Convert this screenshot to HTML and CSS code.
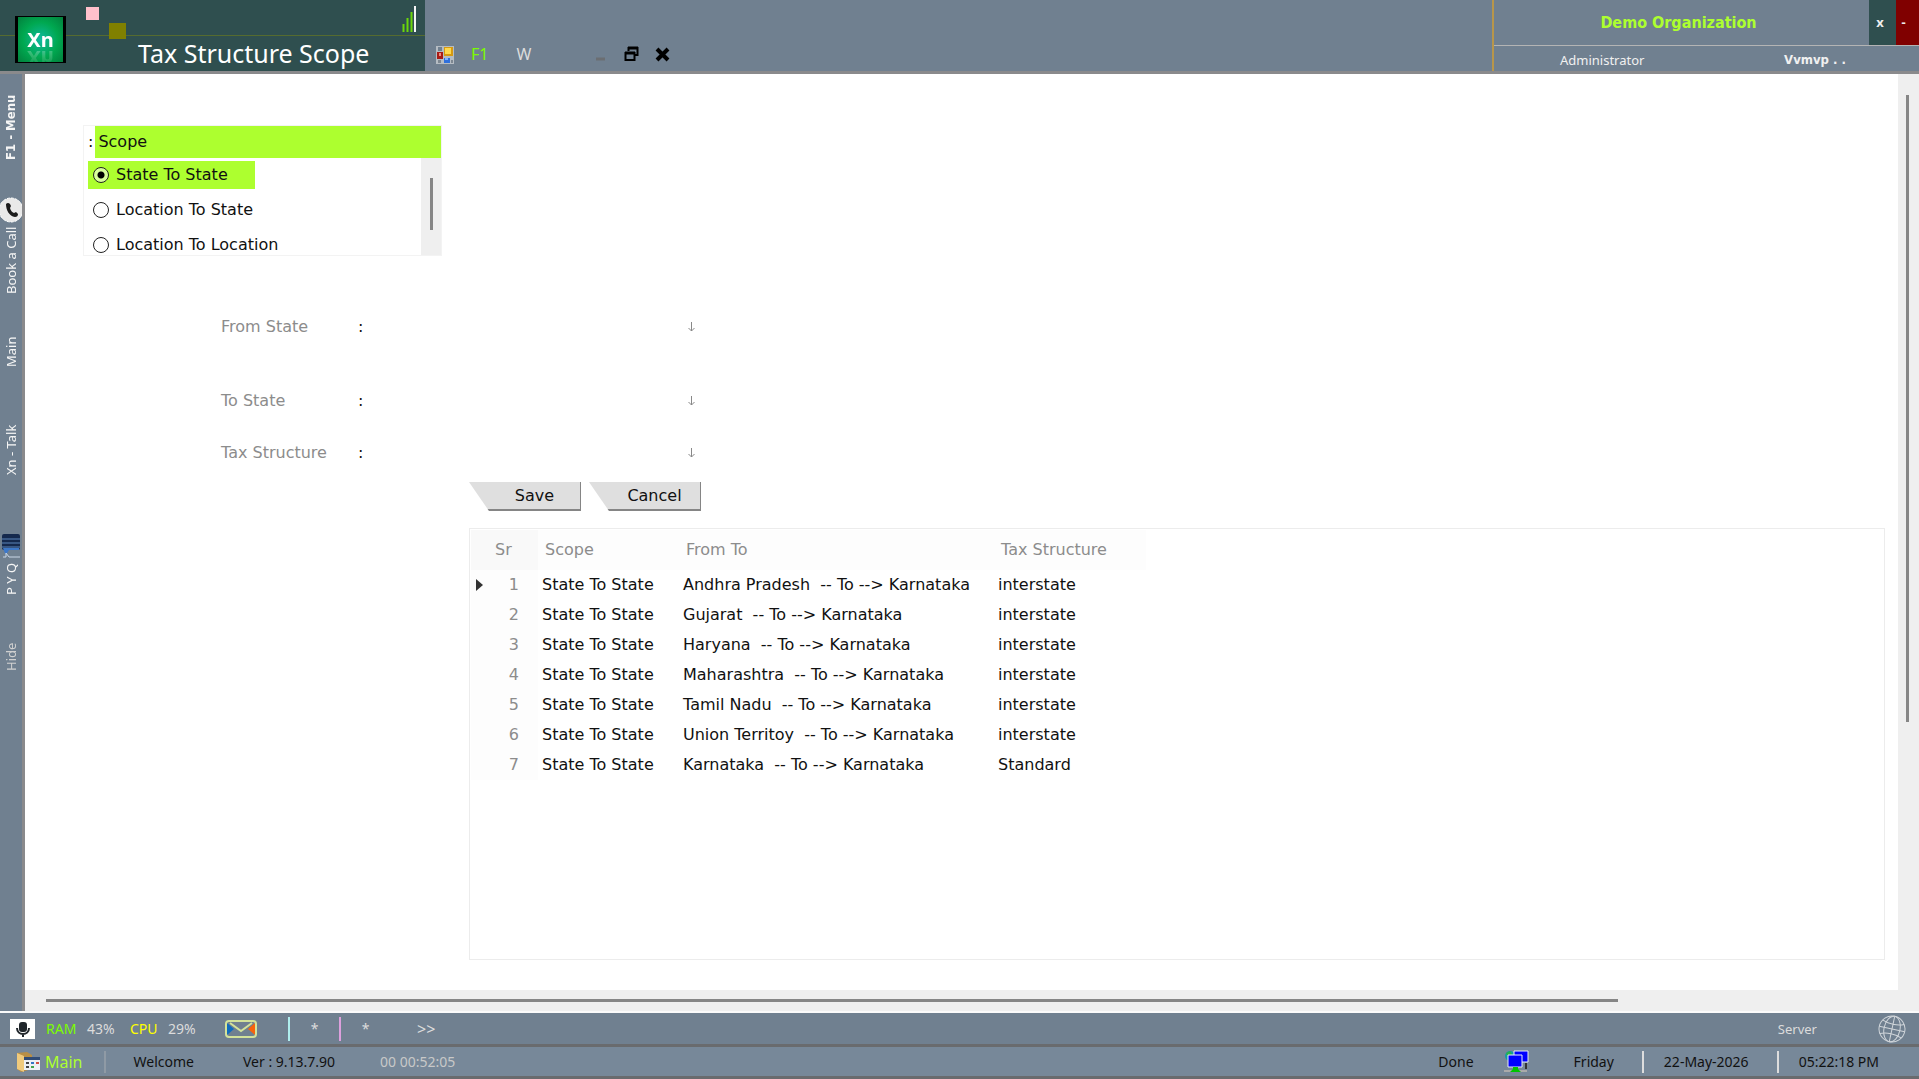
FILE: index.html
```
<!DOCTYPE html>
<html lang="en">
<head>
<meta charset="utf-8">
<title>Tax Structure Scope</title>
<link rel="stylesheet" href="styles.css">
</head>
<body>
<div class="app">
  <header class="topbar">
    <div class="brand">
      <div class="brand-upper">
        <svg class="signal" width="14" height="28" viewBox="0 0 14 28" aria-hidden="true">
          <path d="M1.500 19v8M5.500 13v14M9.500 7v20" stroke="#6bd60a" stroke-width="2"/>
          <path d="M13 1v26" stroke="#f5f5f5" stroke-width="2"/>
        </svg>
      </div>
      <div class="brand-lower"><h1 class="title">Tax Structure Scope</h1></div>
      <div class="logo"><span class="logo-text">Xn</span></div>
      <span class="square pink"></span>
      <span class="square olive"></span>
    </div>
    <nav class="window-tools">
      <svg width="18" height="18" viewBox="0 0 18 18" aria-hidden="true">
        <rect width="18" height="18" fill="#b5bcc3"/>
        <path d="M2 1h4v4H2z" fill="#708090"/><path d="M2 14h3v3H2zM15 14h2v3h-2z" fill="#7d8791"/>
        <rect x="8" y="1" width="9" height="9" fill="#d69a12"/><rect x="9" y="2" width="6" height="6" fill="#ffd94d"/>
        <rect x="1" y="6" width="6" height="7" fill="#a91b16"/><rect x="3" y="7" width="2" height="3" fill="#f18a7a"/>
        <rect x="8" y="12" width="6" height="5" fill="#2f70dc"/><rect x="9" y="12" width="3" height="2" fill="#7fb4ff"/>
      </svg>
      <a class="tool tool-f1" href="#">F1</a>
      <a class="tool tool-w" href="#">W</a>
      <div class="window-buttons">
        <button class="plain" aria-label="Minimize"><svg width="15" height="16" viewBox="0 0 15 16"><path d="M3 13h9" stroke="#6b6e72" stroke-width="3"/></svg></button>
        <button class="plain" aria-label="Restore"><svg width="15" height="16" viewBox="0 0 15 16"><path d="M4.500 5V2h9v7H11" fill="none" stroke="#000" stroke-width="2"/><path d="M4 2h10" stroke="#000" stroke-width="3"/><path d="M1.500 7h9v7h-9z" fill="none" stroke="#000" stroke-width="2"/><path d="M1 7h10" stroke="#000" stroke-width="3"/></svg></button>
        <button class="plain" aria-label="Close"><svg width="15" height="16" viewBox="0 0 15 16"><path d="M2 3l11 11M13 3L2 14" stroke="#000" stroke-width="4"/></svg></button>
      </div>
    </nav>
    <div class="account">
      <div class="account-upper">
        <strong class="org">Demo Organization</strong>
        <button class="corner corner-x">x</button>
        <button class="corner corner-min">-</button>
      </div>
      <div class="account-lower"><span>Administrator</span><strong class="company">Vvmvp . .</strong></div>
    </div>
  </header>

  <div class="middle">
    <nav class="sidebar">
      <a class="side side-menu" href="#">F1 - Menu</a>
      <a class="side side-call" href="#">Book a Call
        <svg width="22" height="26" viewBox="0 0 22 26" aria-hidden="true"><circle cx="11" cy="13" r="12" fill="#e9e9e9" stroke="#fff" stroke-width="1" stroke-dasharray="3 1"/><path d="M6 7q2-2 4 0l1 2-1 2q1 4 4 5l2-1 2 2q0 3-3 3C9 19 6 13 6 7z" fill="#1b1b1b"/></svg>
      </a>
      <a class="side side-main" href="#">Main</a>
      <a class="side side-talk" href="#">Xn - Talk</a>
      <a class="side side-pyq" href="#">P Y Q
        <svg width="20" height="25" viewBox="0 0 20 25" aria-hidden="true"><rect x="1" width="18" height="16" rx="2" fill="#15294d"/><path d="M1 5h18M1 9h18M1 13h18" stroke="#5d86bb"/><path d="M2 14h16v2H8l-3 5-2-4z" fill="#3d78c9"/><path d="M2 23h3v-4l3 4h11" fill="none" stroke="#c9d6e6"/></svg>
      </a>
      <a class="side side-hide" href="#">Hide</a>
    </nav>

    <main class="workspace">
      <div class="canvas">
        <section class="scope">
          <div class="scope-head"><span>:</span><h2 class="scope-title" id="scope-title">Scope</h2></div>
          <div class="scope-body">
            <div class="scope-list" role="radiogroup" aria-labelledby="scope-title">
              <label class="option"><input type="radio" name="scope" checked>State To State</label>
              <label class="option"><input type="radio" name="scope">Location To State</label>
              <label class="option"><input type="radio" name="scope">Location To Location</label>
            </div>
            <div class="scope-scroll"><span></span></div>
          </div>
        </section>

        <form class="fields">
          <div class="field field-from"><label for="from">From State</label><span>:</span><select id="from"><option></option></select></div>
          <div class="field field-to"><label for="to">To State</label><span>:</span><select id="to"><option></option></select></div>
          <div class="field"><label for="tax">Tax Structure</label><span>:</span><select id="tax"><option></option></select></div>
        </form>

        <div class="results">
          <div class="actions">
            <button class="slant">Save</button>
            <button class="slant">Cancel</button>
          </div>
          <div class="grid-frame">
            <table class="grid">
              <colgroup><col class="col-sr"><col class="col-scope"><col class="col-from"><col class="col-tax"></colgroup>
              <thead><tr><th class="sr">Sr</th><th>Scope</th><th>From To</th><th>Tax Structure</th></tr></thead>
              <tbody>
                <tr class="current"><td class="sr">1</td><td>State To State</td><td>Andhra Pradesh  -- To --&gt; Karnataka</td><td>interstate</td></tr>
                <tr><td class="sr">2</td><td>State To State</td><td>Gujarat  -- To --&gt; Karnataka</td><td>interstate</td></tr>
                <tr><td class="sr">3</td><td>State To State</td><td>Haryana  -- To --&gt; Karnataka</td><td>interstate</td></tr>
                <tr><td class="sr">4</td><td>State To State</td><td>Maharashtra  -- To --&gt; Karnataka</td><td>interstate</td></tr>
                <tr><td class="sr">5</td><td>State To State</td><td>Tamil Nadu  -- To --&gt; Karnataka</td><td>interstate</td></tr>
                <tr><td class="sr">6</td><td>State To State</td><td>Union Territoy  -- To --&gt; Karnataka</td><td>interstate</td></tr>
                <tr><td class="sr">7</td><td>State To State</td><td>Karnataka  -- To --&gt; Karnataka</td><td>Standard</td></tr>
              </tbody>
            </table>
          </div>
        </div>
      </div>
      <div class="vscroll"><span></span></div>
      <div class="hscroll"><span></span></div>
    </main>
  </div>

  <footer class="footer">
    <div class="status">
      <svg class="mic" width="25" height="20" viewBox="0 0 25 20" aria-hidden="true"><rect width="25" height="20" fill="#fff"/><rect x="9" y="3" width="8" height="10" rx="3" fill="#20262b"/><path d="M7 9c0 8 12 8 12 0M13 15v3" fill="none" stroke="#20262b" stroke-width="2"/></svg>
      <span class="ram">RAM</span><span class="ram-value">43%</span>
      <span class="cpu">CPU</span><span class="cpu-value">29%</span>
      <svg class="mail" width="32" height="18" viewBox="0 0 32 18" aria-hidden="true"><path d="M2 3l7 6-7 6z" fill="#0f6cbd"/><path d="M30 3l-7 6 7 6z" fill="#f7630c"/><rect x="1" y="1" width="30" height="16" rx="3" fill="none" stroke="#d3e29a" stroke-width="2"/><path d="M5 3l11 8L27 3" fill="none" stroke="#d3e29a" stroke-width="2"/></svg>
      <span class="tick cyan"></span><span class="star">*</span>
      <span class="tick plum"></span><span class="star">*</span>
      <span class="more">&gt;&gt;</span>
      <span class="server">Server</span>
      <svg width="28" height="28" viewBox="0 0 28 28" fill="none" stroke="#d0d5da" aria-hidden="true"><g transform="rotate(12 14 14)"><circle cx="14" cy="14" r="13"/><ellipse cx="14" cy="14" rx="8" ry="13"/><path d="M1 14h26M3 7c6 3 16 3 22 0M3 21c6-3 16-3 22 0M14 1v26"/></g></svg>
    </div>
    <div class="status status-lower">
      <svg width="24" height="22" viewBox="0 0 24 22" aria-hidden="true"><path d="M1 2l10-1 5 3v14L5 21l-4-3z" fill="#b98f45"/><path d="M1 2l7 3v16l-7-3z" fill="#f0ca7c"/><rect x="8" y="6" width="16" height="13" fill="#edf0f4"/><path d="M8 6h16v3H8z" fill="#314c75"/><path d="M10 12h3M10 16h3" stroke="#444" stroke-width="2"/><path d="M15 12h3" stroke="#3476c5" stroke-width="2"/><path d="M15 16h3" stroke="#42a34b" stroke-width="2"/><path d="M20 12h3" stroke="#d05043" stroke-width="2"/></svg>
      <a class="main-link" href="#">Main</a>
      <span class="divider"></span>
      <span class="welcome">Welcome</span>
      <span class="version">Ver : 9.13.7.90</span>
      <span class="elapsed">00 00:52:05</span>
      <span class="done">Done</span>
      <svg class="network" width="25" height="23" viewBox="0 0 25 23" aria-hidden="true"><circle cx="6" cy="6" r="5" fill="#1499a8"/><path d="M2 3l4-2 2 3-4 4z" fill="#28b34d"/><path d="M10 1h14v11H10z" fill="#00f" stroke="#e7edf5" stroke-width="1"/><path d="M4 5h14v12H4z" fill="#00f" stroke="#e7edf5" stroke-width="1"/><path d="M22 13v6" stroke="#333" stroke-width="2"/><path d="M0 21h23" stroke="#aaa" stroke-width="2"/><path d="M9 17h5v2l3 3H6l3-3z" fill="#00c400"/></svg>
      <span class="day">Friday</span>
      <span class="divider light"></span>
      <span class="date">22-May-2026</span>
      <span class="divider light"></span>
      <span class="time">05:22:18 PM</span>
    </div>
  </footer>
</div>
</body>
</html>
```
FILE: styles.css
```
* { box-sizing: border-box; }
body { margin: 0; font: 16px/20px "DejaVu Sans", sans-serif; color: #111; background: #fff; }
a { text-decoration: none; color: inherit; }
button { font: inherit; border: 0; padding: 0; }
h1, h2 { margin: 0; font-weight: 400; }
svg { flex: none; display: block; }

.app { min-height: 100vh; display: flex; flex-direction: column; }

/* top bar */
.topbar { display: flex; height: 74px; background: #708090; border-bottom: 3px solid #8a8a8c; color: #f0f0f0; }
.brand { position: relative; width: 425px; background: #2f4f4f; display: flex; flex-direction: column; }
.brand-upper { height: 36px; border-bottom: 1px solid #556b2f; display: flex; justify-content: flex-end; align-items: center; padding: 2px 9px 0 0; }
.brand-lower { flex: 1; padding: 1px 0 0 138px; }
.title { font: 25px/32px "Noto Sans", sans-serif; color: #fff; white-space: nowrap; }
.logo { position: absolute; left: 15px; top: 16px; width: 51px; height: 47px; overflow: hidden; border: solid #000; border-width: 1px 3px; background: radial-gradient(#10b9a0 0, #00a850 55%, #02803c 100%); text-align: center; }
.logo-text { display: block; margin-top: 12px; font: bold 20px/22px "Noto Sans", sans-serif; color: #fff; -webkit-box-reflect: below -4px linear-gradient(transparent, rgba(255, 255, 255, .3)); }
.square { position: absolute; }
.pink { left: 86px; top: 7px; width: 13px; height: 13px; background: #ffc0cb; }
.olive { left: 109px; top: 23px; width: 17px; height: 16px; background: #808000; }
.window-tools { flex: 1; display: flex; align-items: flex-end; padding: 0 0 7px 11px; }
.tool { font: 16px/20px "Noto Sans", sans-serif; }
.tool-f1 { color: #7cfc00; margin-left: 17px; }
.tool-w { color: #dcdcdc; margin-left: 28px; }
.window-buttons { display: flex; gap: 16px; margin-left: 62px; padding-bottom: 2px; }
.plain { background: none; }
.account { width: 427px; border-left: 2px solid #b8964a; display: flex; flex-direction: column; font: 13px/20px "Noto Sans", sans-serif; }
.account-upper { display: flex; height: 46px; border-bottom: 1px solid #b4b4b4; }
.org { flex: 1; display: flex; align-items: center; justify-content: center; padding-right: 6px; font: bold 16px/20px "DejaVu Sans Condensed", "DejaVu Sans", sans-serif; color: #adff2f; }
.corner { color: #eee; font: bold 13px/20px "Noto Sans", sans-serif; }
.corner-x { width: 27px; background: #2f4f4f; padding: 0 5px 2px 0; }
.corner-min { width: 23px; background: #800000; padding: 0 8px 2px 0; }
.account-lower { flex: 1; display: flex; align-items: center; justify-content: space-between; padding: 2px 73px 0 66px; }
.company { font-family: "DejaVu Sans Condensed", "DejaVu Sans", sans-serif; }

/* side bar */
.middle { flex: 1; display: flex; }
.sidebar { width: 25px; background: #708090; border-right: 3px solid #8a8a8c; display: flex; flex-direction: column; align-items: center; color: #f5f5f5; font: 13px/20px "Noto Sans", sans-serif; padding-top: 17px; }
.side { writing-mode: vertical-rl; transform: rotate(180deg); display: flex; align-items: center; gap: 4px; white-space: nowrap; }
.side svg { transform: rotate(180deg); }
.side-menu { height: 69px; font-weight: 700; font-family: "DejaVu Sans Condensed", "DejaVu Sans", sans-serif; }
.side-call { margin-top: 36px; height: 98px; }
.side-main { margin-top: 43px; height: 30px; }
.side-talk { margin-top: 54px; height: 54px; }
.side-pyq { margin-top: 56px; height: 64px; }
.side-hide { margin-top: 48px; height: 28px; color: #d0d0d0; }

/* work area */
.workspace { flex: 1; min-width: 0; display: grid; grid-template-columns: minmax(0, 1fr) 21px; grid-template-rows: 1fr 21px; background: #efefef; }
.canvas { background: #fff; padding: 51px 13px 30px 58px; display: flex; flex-direction: column; }
.vscroll { display: flex; justify-content: center; padding: 21px 2px 0 0; }
.vscroll span { width: 3px; height: 70%; background: #868686; }
.hscroll { grid-column: 1 / -1; padding: 9px 24px 0 21px; }
.hscroll span { display: block; width: 85%; height: 3px; background: #868686; }

.scope { width: 359px; border: 1px solid #f3f3f3; }
.scope-head { display: flex; align-items: center; padding-left: 4px; gap: 2px; }
.scope-title { flex: 1; font-size: 16px; line-height: 32px; padding-left: 3px; background: #adff2f; }
.scope-body { display: flex; height: 97px; overflow: hidden; }
.scope-list { flex: 1; padding: 3px 0 0 4px; display: flex; flex-direction: column; align-items: flex-start; gap: 7px; }
.option { flex: none; display: flex; align-items: center; gap: 7px; height: 28px; padding: 0 27px 0 5px; }
.option:has(:checked) { background: #adff2f; }
.option input { appearance: none; margin: 0; width: 16px; height: 16px; border: 1px solid #222; border-radius: 50%; background: #fff; }
.option input:checked { background: radial-gradient(#000 0 3px, #d8ff9c 4px); }
.scope-scroll { width: 20px; background: #efefef; display: flex; justify-content: center; padding-top: 20px; }
.scope-scroll span { width: 3px; height: 52px; background: #868686; }

.fields { padding: 56px 0 0 138px; }
.field { display: grid; grid-template-columns: 137px 20px 318px; height: 30px; align-items: center; color: #8c8c8c; }
.field span { color: #111; }
.field-from { margin-bottom: 44px; }
.field-to { margin-bottom: 22px; }
.field select { appearance: none; height: 26px; border: 0; font: inherit; background: url("data:image/svg+xml,%3Csvg xmlns='http://www.w3.org/2000/svg' width='7' height='10'%3E%3Cpath d='M3.500 0v9M.5 6l3 3 3-3' fill='none' stroke='%23888'/%3E%3C/svg%3E") no-repeat right 1px center; }

.results { flex: 1; display: flex; flex-direction: column; gap: 17px; margin: 14px 0 0 386px; }
.actions { display: flex; gap: 8px; }
.slant { width: 112px; height: 29px; padding-left: 20px; background: #dfdfdf; border: solid #858585; border-width: 0 1px 2px 0; clip-path: polygon(0 0, 100% 0, 100% 100%, 20px 100%); color: #111; }
.grid-frame { flex: 1; border: 1px solid #ececec; padding: 1px; }
.grid { table-layout: fixed; width: 675px; border-collapse: collapse; white-space: pre; }
.col-sr { width: 67px; }
.col-scope { width: 141px; }
.col-from { width: 315px; }
.col-tax { width: 152px; }
.grid th { height: 40px; padding: 0 7px; font-weight: 400; text-align: left; color: #8c8c8c; background: #fdfdfd; }
.grid th.sr { background: #f9f9f9; padding-left: 24px; }
.grid td { height: 30px; padding: 0 4px; }
.grid td.sr { color: #8c8c8c; text-align: right; padding: 0 19px 0 0; background: #fdfdfd; }
.grid .current .sr { background: #fdfdfd url("data:image/svg+xml,%3Csvg xmlns='http://www.w3.org/2000/svg' width='7' height='12'%3E%3Cpath d='M0 0l7 6-7 6z' fill='%23333'/%3E%3C/svg%3E") no-repeat 5px center; }

/* status bars */
.footer { border-top: 2px solid #fafafa; font: 14px/20px "Noto Sans", sans-serif; }
.status { display: flex; align-items: center; height: 34px; padding: 0 13px 0 10px; background: #708090; border-bottom: 3px solid #696b6e; color: #dcdcdc; white-space: nowrap; }
.ram { width: 41px; margin-left: 11px; color: #7cfc00; }
.ram-value { width: 43px; }
.cpu { width: 38px; color: #ff0; }
.cpu-value { width: 57px; }
.tick { width: 2px; height: 24px; }
.cyan { background: #afeeee; margin-left: 31px; }
.plum { background: #dda0dd; }
.star { width: 49px; text-align: center; }
.more { margin-left: 27px; font-size: 16px; }
.server { margin: 0 61px 0 auto; font-size: 13px; }
.status-lower { height: 32px; padding: 0 40px 0 16px; background: #778899; color: #111; }
.main-link { margin-left: 5px; color: #adff2f; font-size: 16px; }
.divider { width: 2px; height: 22px; background: #8f9aa5; margin-left: 21px; }
.light { background: #ddd; }
.welcome { margin-left: 28px; }
.version { margin-left: 49px; }
.elapsed { margin-left: 45px; color: #c8c8c8; }
.done { margin-left: auto; }
.network { margin: 0 45px 0 30px; }
.day + .divider { margin-left: 28px; }
.date { margin-left: 20px; }
.date + .divider { margin-left: 28px; }
.time { margin-left: 20px; }
```
